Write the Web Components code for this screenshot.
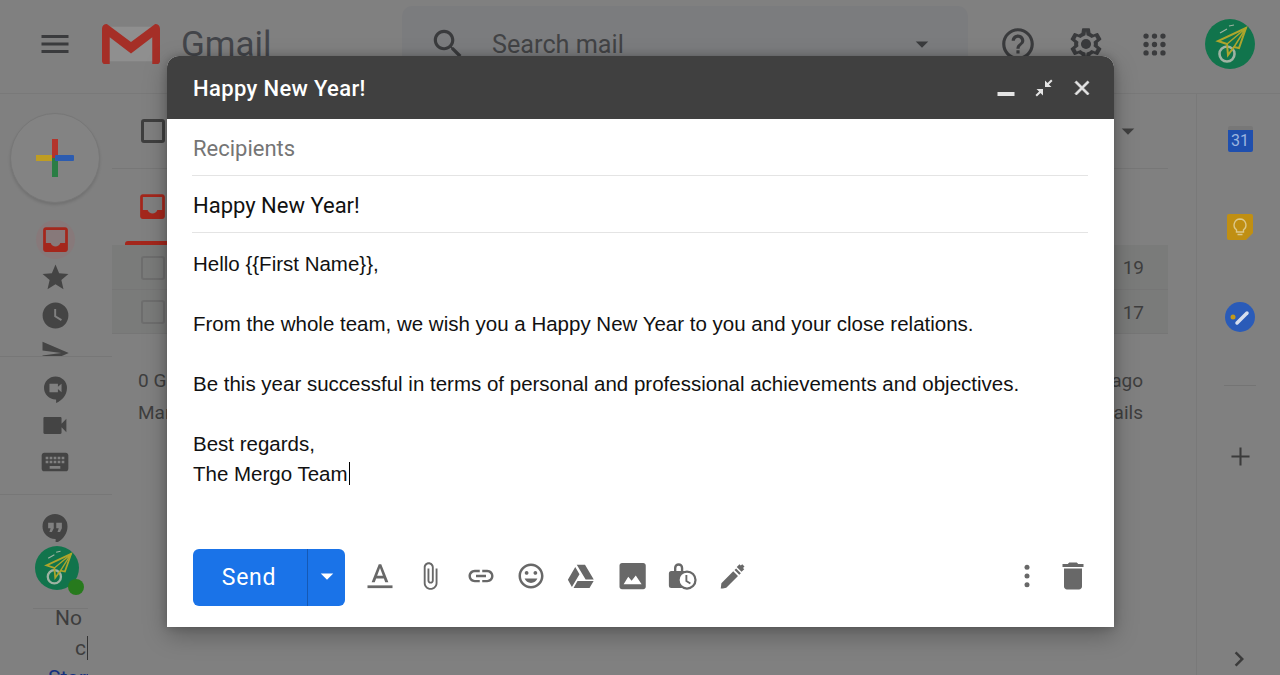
<!DOCTYPE html>
<html lang="en">
<head>
<meta charset="UTF-8">
<title>Gmail - Happy New Year!</title>
<style>
  html, body { margin: 0; height: 100%; background: #808080; }
  body { font-family: Roboto, "Liberation Sans", sans-serif; overflow: hidden; }
</style>
</head>
<body>
<gm-app>
  <gm-compose title-text="Happy New Year!" subject="Happy New Year!">
    <div>Hello {{First Name}},</div>
    <div><br></div>
    <div>From the whole team, we wish you a Happy New Year to you and your close relations.</div>
    <div><br></div>
    <div>Be this year successful in terms of personal and professional achievements and objectives.</div>
    <div><br></div>
    <div>Best regards,</div>
    <div>The Mergo Team<span style="border-left:1px solid #000;margin-left:1px"></span></div>
  </gm-compose>
</gm-app>

<script>
const ICONS = {
  menu: '<path d="M3 18h18v-2H3v2zm0-5h18v-2H3v2zm0-7v2h18V6H3z"/>',
  search: '<path d="M15.5 14h-.79l-.28-.27C15.41 12.59 16 11.11 16 9.5 16 5.91 13.09 3 9.5 3S3 5.91 3 9.5 5.91 16 9.5 16c1.61 0 3.09-.59 4.23-1.57l.27.28v.79l5 4.99L20.49 19l-4.99-5zm-6 0C7.01 14 5 11.99 5 9.5S7.01 5 9.5 5 14 7.01 14 9.5 11.99 14 9.5 14z"/>',
  help: '<path d="M11 18h2v-2h-2v2zm1-16C6.48 2 2 6.48 2 12s4.48 10 10 10 10-4.48 10-10S17.52 2 12 2zm0 18c-4.41 0-8-3.59-8-8s3.59-8 8-8 8 3.59 8 8-3.59 8-8 8zm0-14c-2.21 0-4 1.79-4 4h2c0-1.1.9-2 2-2s2 .9 2 2c0 2-3 1.75-3 5h2c0-2.25 3-2.5 3-5 0-2.21-1.79-4-4-4z"/>',
  gear: '<path d="M19.43 12.98c.04-.32.07-.64.07-.98s-.03-.66-.07-.98l2.11-1.65c.19-.15.24-.42.12-.64l-2-3.46c-.12-.22-.39-.3-.61-.22l-2.49 1c-.52-.4-1.08-.73-1.69-.98l-.38-2.65C14.46 2.18 14.25 2 14 2h-4c-.25 0-.46.18-.49.42l-.38 2.65c-.61.25-1.17.59-1.69.98l-2.49-1c-.23-.09-.49 0-.61.22l-2 3.46c-.13.22-.07.49.12.64l2.11 1.65c-.04.32-.07.65-.07.98s.03.66.07.98l-2.11 1.65c-.19.15-.24.42-.12.64l2 3.46c.12.22.39.3.61.22l2.49-1c.52.4 1.08.73 1.69.98l.38 2.65c.03.24.24.42.49.42h4c.25 0 .46-.18.49-.42l.38-2.65c.61-.25 1.17-.59 1.69-.98l2.49 1c.23.09.49 0 .61-.22l2-3.46c.12-.22.07-.49-.12-.64l-2.11-1.65zM12 20h-.01l-.35-2.5-.99-.4c-.43-.18-.84-.42-1.24-.72l-.85-.65-2.36.95-1-1.73 2-1.56-.13-1.06C7.03 11.97 7 11.66 7 12s.03-.03.07-.33l.13-1.06-2-1.56 1-1.73 2.36.95.85-.65c.4-.3.81-.54 1.24-.72l.99-.4L12 4h.01l.35 2.5.99.4c.43.18.84.42 1.24.72l.85.65 2.36-.95 1 1.73-2 1.56.13 1.06c.04.3.07.61.07.33s-.03.03-.07.33l-.13 1.06 2 1.56-1 1.73-2.36-.95-.85.65c-.4.3-.81.54-1.24.72l-.99.4L12 20z" fill-rule="evenodd"/><circle cx="12" cy="12" r="3.2"/>',
  apps: '<circle cx="5" cy="5" r="2.2"/><circle cx="12" cy="5" r="2.2"/><circle cx="19" cy="5" r="2.2"/><circle cx="5" cy="12" r="2.2"/><circle cx="12" cy="12" r="2.2"/><circle cx="19" cy="12" r="2.2"/><circle cx="5" cy="19" r="2.2"/><circle cx="12" cy="19" r="2.2"/><circle cx="19" cy="19" r="2.2"/>',
  inbox: '<path d="M19 3H5c-1.1 0-2 .9-2 2v14c0 1.1.9 2 2 2h14c1.1 0 2-.9 2-2V5c0-1.1-.9-2-2-2zm0 11.5h-3.5c-.5 1.6-1.9 2.5-3.5 2.5s-3-.9-3.5-2.5H5V5h14v9.500z" fill-rule="evenodd"/>',
  star: '<path d="M12 17.27L18.18 21l-1.64-7.03L22 9.24l-7.19-.61L12 2 9.19 8.63 2 9.24l5.46 4.73L5.82 21z"/>',
  clock: '<path d="M12 2a10 10 0 1 0 0 20 10 10 0 0 0 0-20zm4.200 14.200L11 13V7h1.500v5.200l4.500 2.700-.8 1.300z" fill-rule="evenodd"/>',
  sent: '<path d="M2 21l21-9L2 3v7l15 2-15 2z"/>',
  meet: '<path d="M12 2a9.500 9.500 0 0 0 0 19h.5v3c5-2.500 9-6.500 9-12.500A9.500 9.500 0 0 0 12 2zm5 13l-3-2.500V15H7V8h7v2.500L17 8v7z" fill-rule="evenodd"/>',
  video: '<path d="M17 10.500V6c0-.55-.45-1-1-1H3c-.55 0-1 .45-1 1v12c0 .55.45 1 1 1h13c.55 0 1-.45 1-1v-4.500l4 4v-11l-4 4z"/>',
  keyboard: '<path d="M20 5H4c-1.100 0-2 .9-2 2v10c0 1.100.9 2 2 2h16c1.100 0 2-.9 2-2V7c0-1.100-.9-2-2-2zM11 8h2v2h-2V8zm0 3h2v2h-2v-2zM8 8h2v2H8V8zm0 3h2v2H8v-2zm-1 2H5v-2h2v2zm0-3H5V8h2v2zm9 7H8v-2h8v2zm0-4h-2v-2h2v2zm0-3h-2V8h2v2zm3 3h-2v-2h2v2zm0-3h-2V8h2v2z" fill-rule="evenodd"/>',
  quote: '<path d="M12 1.500a10 10 0 0 0 0 20h.5V25c5.500-2.700 9.500-7.500 9.500-13.500a10 10 0 0 0-10-10zM11 13l-1.500 3H7.500l1-3H6.500V8.500H11V13zm6.500 0L16 16h-2l1-3h-2V8.500h4.500V13z" fill-rule="evenodd"/>',
  caret: '<path d="M7 10l5 5 5-5z"/>',
  plus: '<path d="M19 12.800h-6.200V19h-1.600v-6.200H5v-1.600h6.200V5h1.600v6.200H19v1.600z"/>',
  chevron: '<path d="M8.590 16.590L13.170 12 8.590 7.410 10 6l6 6-6 6z"/>',
  minimize: '<rect x="3.500" y="16" width="17" height="4"/>',
  shrink: '<path d="M3.500 19.100l3.600-3.600-2.600-2.600H11v6.500l-2.500-2.500-3.600 3.600zM20.500 4.900l-3.600 3.600 2.600 2.600H13V4.600l2.500 2.500 3.600-3.600z"/>',
  close: '<path d="M19 6.410L17.590 5 12 10.590 6.410 5 5 6.410 10.590 12 5 17.590 6.410 19 12 13.410 17.590 19 19 17.590 13.410 12z" stroke="currentColor" stroke-width=".8"/>',
  text: '<path d="M11 2.500L5.300 17h2.500l1.120-3h6.160l1.120 3h2.500L13 2.500h-2zm-1.300 9.300L12 5.600l2.300 6.200H9.700z"/><rect x="2" y="19.500" width="20" height="2.200"/>',
  attach: '<path d="M16.500 6v11.500c0 2.210-1.790 4-4 4s-4-1.790-4-4V5c0-1.380 1.120-2.500 2.500-2.500s2.500 1.120 2.500 2.500v10.500c0 .55-.45 1-1 1s-1-.45-1-1V6H10v9.500c0 1.380 1.120 2.500 2.500 2.500s2.500-1.120 2.500-2.500V5c0-2.210-1.790-4-4-4S7 2.790 7 5v12.500c0 3.040 2.460 5.500 5.500 5.500s5.500-2.460 5.500-5.500V6h-1.500z"/>',
  link: '<path d="M3.900 12c0-1.710 1.390-3.100 3.100-3.100h4V7H7c-2.760 0-5 2.240-5 5s2.240 5 5 5h4v-1.900H7c-1.710 0-3.100-1.390-3.100-3.100zM8 13h8v-2H8v2zm9-6h-4v1.900h4c1.710 0 3.100 1.390 3.100 3.100s-1.390 3.100-3.100 3.100h-4V17h4c2.760 0 5-2.240 5-5s-2.240-5-5-5z"/>',
  emoji: '<path d="M11.990 2C6.470 2 2 6.480 2 12s4.470 10 9.990 10C17.520 22 22 17.520 22 12S17.520 2 11.990 2zM12 20c-4.420 0-8-3.580-8-8s3.580-8 8-8 8 3.580 8 8-3.580 8-8 8zm3.500-9c.83 0 1.500-.67 1.500-1.500S16.330 8 15.500 8 14 8.670 14 9.500s.67 1.500 1.500 1.500zm-7 0c.83 0 1.500-.67 1.500-1.500S9.330 8 8.500 8 7 8.670 7 9.500 7.670 11 8.500 11zm3.500 6.500c2.330 0 4.310-1.460 5.110-3.500H6.890c.8 2.040 2.780 3.500 5.110 3.500z"/>',
  drive: '<path d="M8.600 3h6.600l7 11.800h-6.500zM7.400 4.800L1.500 15l3.200 5.800 6.100-10.300zM9.200 16h12.900l-3.300 5.500H6z"/>',
  photo: '<path d="M23 20.500v-17c0-1.100-.9-2-2-2H4c-1.100 0-2 .9-2 2v17c0 1.100.9 2 2 2h17c1.100 0 2-.9 2-2zM9 12.500l2.700 3.200 3.300-4.200 4.700 7H5.300l3.700-6z" fill-rule="evenodd"/>',
  lockclock: '<path d="M13.500 8H13V5.500a3.700 3.700 0 0 0-7.400 0V8H3.500a2 2 0 0 0-2 2v9.600a2 2 0 0 0 2 2h9a7.600 7.600 0 0 1 2-13.400A2 2 0 0 0 13.500 8zM7.500 8V5.500a1.800 1.800 0 0 1 3.600 0V8z" fill-rule="evenodd"/><circle cx="16" cy="15.200" r="6.800" fill="#fff" stroke="currentColor" stroke-width="1.800"/><path d="M15.500 11.200v4.800l3.200 2" fill="none" stroke="currentColor" stroke-width="1.500"/>',
  pen: '<path d="M3 22l.5-4.300L13 8.200l3.800 3.800-9.400 9.400-2.700.6zM14 7.200l1.300-1.300 3.800 3.800-1.300 1.300zM15.800 4.700L18 2.500l1 1 1.200-1 1.800 1.800-1.200 1.200 1 1L19.600 8.500z"/>',
  more: '<circle cx="12" cy="5" r="2"/><circle cx="12" cy="12" r="2"/><circle cx="12" cy="19" r="2"/>',
  trash: '<path d="M6 19c0 1.100.9 2 2 2h8c1.100 0 2-.9 2-2V7H6v12zM19 4h-3.500l-1-1h-5l-1 1H5v2h14V4z"/>'
};

class GmIcon extends HTMLElement {
  connectedCallback() {
    const size = this.getAttribute('size') || 24;
    this.attachShadow({ mode: 'open' }).innerHTML = `
      <style>
        :host { display: inline-flex; align-items: center; justify-content: center; color: inherit; flex: none; }
        svg { display: block; fill: currentColor; }
      </style>
      <svg width="${size}" height="${size}" viewBox="0 0 24 24">${ICONS[this.getAttribute('name')] || ''}</svg>`;
  }
}
customElements.define('gm-icon', GmIcon);

class GmAvatar extends HTMLElement {
  connectedCallback() {
    const size = this.getAttribute('size') || 50;
    this.attachShadow({ mode: 'open' }).innerHTML = `
      <style>:host { display: block; flex: none; } svg { display: block; }</style>
      <svg width="${size}" height="${size}" viewBox="0 0 50 50">
        <circle cx="25" cy="25" r="25" fill="#11744c"/>
        <circle cx="22" cy="35" r="7.500" fill="none" stroke="#9fb3a3" stroke-width="2.600"/>
        <path d="M41 9L13 22l9 3 1 11 6-8 5 1z" fill="none" stroke="#ada52c" stroke-width="2"/>
        <path d="M41 9L22 25M41 9L29 28" stroke="#ada52c" stroke-width="1.500" fill="none"/>
        <path d="M15 14l7-4M24 7l5-1" stroke="#9fb3a3" stroke-width="1.200" fill="none"/>
      </svg>`;
  }
}
customElements.define('gm-avatar', GmAvatar);

class GmHeader extends HTMLElement {
  constructor() {
    super();
    this.attachShadow({ mode: 'open' }).innerHTML = `
      <style>
        :host { display: flex; align-items: center; height: 94px; box-sizing: border-box; padding-bottom: 5px; border-bottom: 1px solid #797979; color: #3a3b3d; flex: none; }
        .burger { margin-left: 37px; }
        .logo { margin-left: 29px; display: block; }
        .name { margin-left: 21px; width: 221px; font-size: 35px; color: #43454a; }
        .search { width: 566px; height: 76px; box-sizing: border-box; background: #7b7c7e; border-radius: 10px; display: flex; align-items: center; padding: 0 31px 0 27px; }
        .search span { margin-left: 25px; font-size: 26px; color: #424345; flex: 1; transform: scaleX(.97); transform-origin: left; }
        .tools { display: flex; align-items: center; margin-left: 16px; }
        .tools gm-icon { width: 68px; }
        gm-avatar { margin-left: 17px; }
      </style>
      <gm-icon class="burger" name="menu" size="36"></gm-icon>
      <svg class="logo" width="58" height="40" viewBox="0 0 60 42" preserveAspectRatio="none">
        <path d="M2 3h56v36H2z" fill="#8f8f8f"/>
        <path d="M3 42c-1.600 0-3-1.400-3-3V5c0-3 2-5 5-5l25 19L55 0c3 0 5 2 5 5v34c0 1.600-1.400 3-3 3h-5V14L30 31 8 14v28z" fill="#a52f27"/>
      </svg>
      <span class="name">Gmail</span>
      <div class="search">
        <gm-icon name="search" size="38"></gm-icon>
        <span>Search mail</span>
        <gm-icon name="caret" size="30"></gm-icon>
      </div>
      <div class="tools">
        <gm-icon name="help" size="38"></gm-icon>
        <gm-icon name="gear" size="38"></gm-icon>
        <gm-icon name="apps" size="29"></gm-icon>
      </div>
      <gm-avatar size="50"></gm-avatar>`;
  }
}
customElements.define('gm-header', GmHeader);

class GmSidebar extends HTMLElement {
  constructor() {
    super();
    this.attachShadow({ mode: 'open' }).innerHTML = `
      <style>
        :host { display: block; width: 112px; flex: none; color: #444; overflow: hidden; }
        .group { display: flex; flex-direction: column; align-items: center; width: 112px; box-sizing: border-box; overflow: hidden; border-bottom: 1px solid #777; padding-right: 2px; }
        .top { height: 263px; padding-top: 19px; }
        .mid { height: 138px; padding-top: 12.500px; }
        .low { border: 0; padding-top: 12px; position: relative; padding-right: 0; }
        .compose { width: 90px; height: 90px; box-sizing: border-box; border-radius: 50%; flex: none; margin-bottom: 17px; background: #838383; border: 1px solid #777; box-shadow: 0 2px 3px rgba(0,0,0,.12); display: flex; align-items: center; justify-content: center; }
        .row { height: 38px; width: 100%; flex: none; display: flex; align-items: center; justify-content: center; }
        .mid .row { height: 37px; }
        .low .row { height: 39px; padding-right: 2px; box-sizing: border-box; }
        .inbox { color: #a4271c; }
        .halo { display: flex; padding: 3px; border-radius: 50%; background: #87797a; }
        .face { position: relative; align-self: flex-start; margin-left: 35px; height: 44px; }
        .dot { position: absolute; left: 33px; top: 33px; width: 16px; height: 16px; border-radius: 50%; background: #277a1d; }
        .rule { align-self: flex-start; margin: 18px 0 0 33px; width: 55px; border-top: 1px solid #777; }
        .note { align-self: flex-start; margin: -6px 0 0 48px; width: 40px; overflow: hidden; font-size: 21px; line-height: 30px; color: #3d3d3d; white-space: nowrap; }
        .note div:nth-child(1) { padding-left: 7px; }
        .note div:nth-child(2) { padding-left: 27px; }
        .note div:nth-child(2) b { font-weight: 400; border-right: 1px solid #333; padding-right: 1px; }
        .note a { color: #14307e; text-decoration: none; display: block; }
      </style>
      <div class="group top">
        <div class="compose">
          <svg width="38" height="38" viewBox="0 0 38 38">
            <rect x="0" y="16" width="19" height="6" fill="#bf9d22"/>
            <rect x="16" y="0" width="6" height="19" fill="#b3342b"/>
            <rect x="16" y="19" width="6" height="19" fill="#2a7d44"/>
            <rect x="19" y="16" width="19" height="6" rx="1" fill="#2c5cb0"/>
          </svg>
        </div>
        <div class="row"><span class="halo inbox"><gm-icon name="inbox" size="33"></gm-icon></span></div>
        <div class="row"><gm-icon name="star" size="31"></gm-icon></div>
        <div class="row"><gm-icon name="clock" size="31"></gm-icon></div>
        <div class="row"><gm-icon name="sent" size="30"></gm-icon></div>
      </div>
      <div class="group mid">
        <div class="row"><gm-icon name="meet" size="29"></gm-icon></div>
        <div class="row"><gm-icon name="video" size="29"></gm-icon></div>
        <div class="row"><gm-icon name="keyboard" size="32"></gm-icon></div>
      </div>
      <div class="group low">
        <div class="row"><gm-icon name="quote" size="30"></gm-icon></div>
        <div class="face"><gm-avatar size="44"></gm-avatar><span class="dot"></span></div>
        <div class="rule"></div>
        <div class="note">
          <div>No</div>
          <div><b>c</b></div>
          <a>Start a new one</a>
        </div>
      </div>`;
  }
}
customElements.define('gm-sidebar', GmSidebar);

class GmInbox extends HTMLElement {
  constructor() {
    super();
    this.attachShadow({ mode: 'open' }).innerHTML = `
      <style>
        :host { display: block; flex: 1; min-width: 0; padding-right: 28px; color: #3e3e3e; font-size: 19px; }
        .check { display: block; width: 24px; height: 24px; box-sizing: border-box; border: 3px solid #3f3f3f; border-radius: 3px; flex: none; }
        .bar { height: 75px; box-sizing: border-box; padding: 0 28px 0 29px; display: flex; align-items: center; justify-content: space-between; border-bottom: 1px solid #777; }
        .bar gm-icon { color: #3f3f3f; margin-right: -3px; }
        .tabs { height: 72px; box-sizing: border-box; padding: 21px 0 0 24px; color: #a4271c; }
        .under { height: 4px; background: #a4271c; width: 300px; border-radius: 3px 3px 0 0; margin-left: 13px; }
        .row { height: 44.500px; box-sizing: border-box; padding: 2px 24px 0 29px; display: flex; align-items: center; justify-content: space-between; background: #7a7b7a; border-bottom: 1px solid #767676; }
        .row .check { border-color: #6e6e6e; border-width: 2px; }
        .row span:last-child { word-spacing: 6px; }
        .foot { display: flex; justify-content: space-between; padding: 31px 25px 0 26px; line-height: 32px; }
        .foot div:last-child { text-align: right; }
      </style>
      <div class="bar"><span class="check"></span><gm-icon name="caret" size="30"></gm-icon></div>
      <div class="tabs"><gm-icon name="inbox" size="33"></gm-icon></div>
      <div class="under"></div>
      <div class="row"><span class="check"></span><span>Jan 19</span></div>
      <div class="row"><span class="check"></span><span>Dec 17</span></div>
      <div class="foot">
        <div>0 GB<br>Manage</div>
        <div>2 days ago<br>Details</div>
      </div>`;
  }
}
customElements.define('gm-inbox', GmInbox);

class GmRail extends HTMLElement {
  constructor() {
    super();
    this.attachShadow({ mode: 'open' }).innerHTML = `
      <style>
        :host { display: flex; flex-direction: column; align-items: center; width: 84px; flex: none; box-sizing: border-box; border-left: 1px solid #797979; padding: 32px 0 0 3px; color: #3b3b3b; }
        .tile { height: 88px; flex: none; display: flex; align-items: flex-start; justify-content: center; }
        .cal { width: 25px; height: 26px; background: #1f4fae; border-top: 4px solid #777; box-sizing: border-box; color: #9bb5e0; font-size: 16px; line-height: 22px; text-align: center; border-radius: 2px; }
        .line { width: 32px; border-top: 1px solid #747474; margin-top: -5px; }
        .add { margin-top: 55px; }
        .next { margin: 172px 2px 0 0; }
      </style>
      <div class="tile"><div class="cal">31</div></div>
      <div class="tile">
        <svg width="26" height="26" viewBox="0 0 26 26">
          <path d="M2 0h22a2 2 0 0 1 2 2v17l-7 7H2a2 2 0 0 1-2-2V2a2 2 0 0 1 2-2z" fill="#c08f12"/>
          <path d="M13 5a6 6 0 0 0-3.500 10.800V18h7v-2.200A6 6 0 0 0 13 5z" fill="none" stroke="#dcc88a" stroke-width="1.400"/>
          <path d="M10.500 20.500h5" stroke="#dcc88a" stroke-width="1.500"/>
        </svg>
      </div>
      <div class="tile">
        <svg width="30" height="30" viewBox="0 0 30 30">
          <circle cx="15" cy="15" r="15" fill="#2a5bb8"/>
          <path d="M12 21l10-10" stroke="#d6dfee" stroke-width="3.500" stroke-linecap="round"/>
          <circle cx="8" cy="15" r="2.500" fill="#c39a1a"/>
        </svg>
      </div>
      <div class="line"></div>
      <gm-icon class="add" name="plus" size="31"></gm-icon>
      <gm-icon class="next" name="chevron" size="30"></gm-icon>`;
  }
}
customElements.define('gm-rail', GmRail);

class GmCompose extends HTMLElement {
  connectedCallback() {
    const title = this.getAttribute('title-text');
    const subject = this.getAttribute('subject');
    const tools = ['text', 'attach', 'link', 'emoji', 'drive', 'photo', 'lockclock', 'pen'];
    this.attachShadow({ mode: 'open' }).innerHTML = `
      <style>
        :host { position: absolute; left: 167px; top: 56px; width: 947px; height: 571px; display: flex; flex-direction: column; background: #fff; border-radius: 12px 12px 0 0; box-shadow: 0 8px 24px rgba(0,0,0,.28), 0 0 8px rgba(0,0,0,.2); }
        .head { height: 63px; flex: none; box-sizing: border-box; background: #404040; border-radius: 12px 12px 0 0; display: flex; align-items: center; padding: 2px 13px 0 26px; color: #fff; font-weight: 500; font-size: 22px; letter-spacing: .35px; }
        .head span { flex: 1; }
        .head gm-icon { color: #e4e4e4; width: 38px; margin-top: -2px; }
        .fields { margin: 0 26px 0 25px; font-size: 22px; }
        .field { height: 57px; box-sizing: border-box; padding: 2px 0 0 1px; border-bottom: 1px solid #e4e4e4; display: flex; align-items: center; color: #111; }
        .field.to { color: #757575; }
        .body { flex: 1; margin: 0 25px 0 26px; padding-top: 16px; font-family: "Liberation Sans", Arial, sans-serif; font-size: 20.5px; line-height: 30px; color: #111; }
        .foot { height: 57px; flex: none; margin: 0 25px 21px 26px; display: flex; align-items: center; color: #686868; }
        .foot gm-icon { margin-bottom: 4px; }
        .send { width: 152px; height: 57px; flex: none; display: flex; background: #1a73e8; color: #fff; border-radius: 6px; font-size: 23px; letter-spacing: .7px; margin-right: 10px; }
        .send b { font-weight: 400; width: 115px; padding-right: 2px; box-sizing: border-box; border-right: 1px solid #1559b5; display: flex; align-items: center; justify-content: center; }
        .send gm-icon { flex: 1; color: #fff; }
        .tool { width: 50.300px; }
        .spring { flex: 1; }
        .more { width: 46px; }
        .trash { width: 46px; margin-right: -7px; }
      </style>
      <div class="head">
        <span>${title}</span>
        <gm-icon name="minimize" size="24"></gm-icon>
        <gm-icon name="shrink" size="24"></gm-icon>
        <gm-icon name="close" size="24"></gm-icon>
      </div>
      <div class="fields">
        <div class="field to">Recipients</div>
        <div class="field">${subject}</div>
      </div>
      <div class="body"><slot></slot></div>
      <div class="foot">
        <div class="send"><b>Send</b><gm-icon name="caret" size="30"></gm-icon></div>
        ${tools.map(t => `<gm-icon class="tool" name="${t}" size="30"></gm-icon>`).join('')}
        <span class="spring"></span>
        <gm-icon class="more" name="more" size="30"></gm-icon>
        <gm-icon class="trash" name="trash" size="36"></gm-icon>
      </div>`;
  }
}
customElements.define('gm-compose', GmCompose);

class GmApp extends HTMLElement {
  constructor() {
    super();
    this.attachShadow({ mode: 'open' }).innerHTML = `
      <style>
        :host { display: flex; flex-direction: column; position: relative; width: 1280px; height: 675px; overflow: hidden; background: #808080; }
        .work { flex: 1; min-height: 0; display: flex; }
      </style>
      <gm-header></gm-header>
      <div class="work">
        <gm-sidebar></gm-sidebar>
        <gm-inbox></gm-inbox>
        <gm-rail></gm-rail>
      </div>
      <slot></slot>`;
  }
}
customElements.define('gm-app', GmApp);
</script>
</body>
</html>
